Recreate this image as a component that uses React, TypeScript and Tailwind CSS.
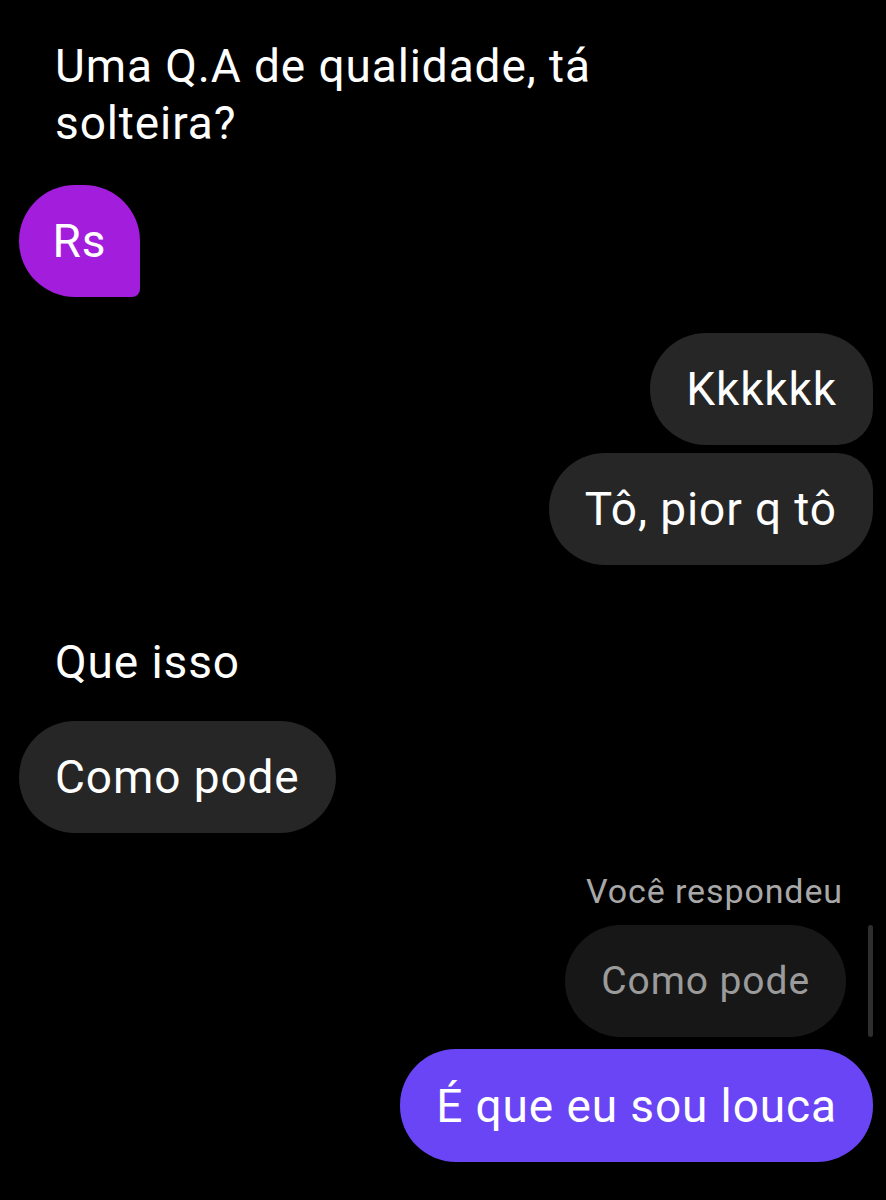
import React from "react";

const font = { fontFamily: "Roboto, 'Noto Sans', sans-serif" };

function Bubble({
  children,
  className,
}: {
  children: React.ReactNode;
  className: string;
}) {
  return (
    <div className={`h-[112px] flex items-center px-[36px] leading-none ${className}`}>
      {children}
    </div>
  );
}

export default function App() {
  return (
    <div
      className="w-[886px] h-[1200px] bg-black text-white text-[46px] tracking-[0.9px] overflow-hidden"
      style={font}
    >
      <div className="flex flex-col pt-[38px]">
        <p className="pl-[55px] pr-[270px] leading-[57px]">
          Uma Q.A de qualidade, tá solteira?
        </p>

        <div className="pl-[19px] mt-[33px]">
          <Bubble className="w-[121px] bg-[#a21ddc] rounded-[56px] rounded-br-[8px] justify-center">
            Rs
          </Bubble>
        </div>

        <div className="flex flex-col items-end pr-[13px] mt-[36px] gap-[8px]">
          <Bubble className="bg-[#262626] rounded-[56px] rounded-br-[36px]">Kkkkkk</Bubble>
          <Bubble className="bg-[#262626] rounded-[56px] rounded-tr-[36px]">Tô, pior q tô</Bubble>
        </div>

        <p className="pl-[55px] mt-[69px] leading-[57px]">Que isso</p>

        <div className="pl-[19px] mt-[30px]">
          <Bubble className="inline-flex bg-[#262626] rounded-[56px]">Como pode</Bubble>
        </div>

        <div className="flex flex-col items-end mt-[38px]">
          <p className="pr-[43px] text-[34px] leading-[40px] text-[#a8a8a8]">Você respondeu</p>
          <div className="flex items-start gap-[22px] pr-[13px] mt-[14px]">
            <Bubble className="px-[35px] text-[39px] bg-[#171717] rounded-[56px] text-[#9b9b9b]">
              Como pode
            </Bubble>
            <div className="w-[5px] h-[112px] rounded-full bg-[#2e2e2e]" />
          </div>
          <div className="pr-[13px] mt-[12px]">
            <Bubble className="h-[113px] bg-[#6a45f5] rounded-[56px]">É que eu sou louca</Bubble>
          </div>
        </div>
      </div>
    </div>
  );
}
